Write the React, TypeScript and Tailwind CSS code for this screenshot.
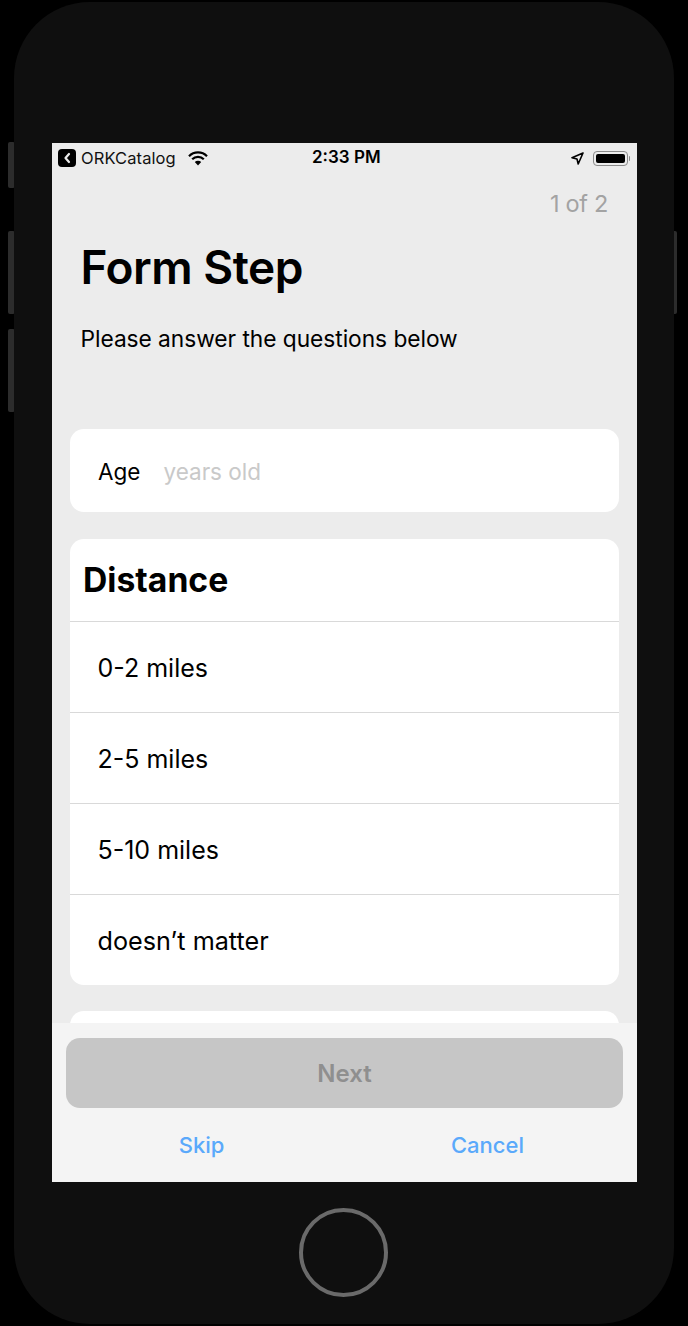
const Row = ({ label, last = false }: { label: string; last?: boolean }) => (
  <div className={`flex items-center pl-[27.5px] text-black ${last ? "h-[90px] pt-[4px] text-[25.2px]" : "h-[91px] pt-[3px] text-[25px] border-b border-[#d9d9d9]"}`}>
    {label}
  </div>
);

const SideButton = ({ className }: { className: string }) => (
  <div className={`absolute w-[7px] bg-[#2c2c2c] rounded-[2px] ${className}`} />
);

export default function App() {
  return (
    <div className="relative w-[688px] h-[1326px] bg-black overflow-hidden" style={{ fontFamily: "Inter, 'Liberation Sans', sans-serif" }}>
      <SideButton className="left-[8px] top-[142px] h-[46px]" />
      <SideButton className="left-[8px] top-[231px] h-[83px]" />
      <SideButton className="left-[8px] top-[329px] h-[83px]" />
      <SideButton className="left-[670px] top-[231px] h-[83px]" />
      <div className="relative ml-[14px] mt-[2px] w-[660px] h-[1322px] bg-[#0f0f0f] rounded-[76px] pt-[141px] pl-[38px]">
        <div className="w-[585px] h-[1039px] bg-[#ececec] flex flex-col overflow-hidden">
          <div className="h-[30px] shrink-0 flex items-center pl-[6px] pr-[7px] text-[16.5px] text-black relative">
            <span className="w-[18px] h-[18px] bg-black rounded-[4px] flex items-center justify-center">
              <svg width="8" height="12" viewBox="0 0 8 12"><path d="M6 2 2.5 6 6 10" fill="none" stroke="#ececec" strokeWidth="2.2" strokeLinecap="round" strokeLinejoin="round" /></svg>
            </span>
            <span className="ml-[5px] tracking-[0.1px] text-[#111]">ORKCatalog</span>
            <svg className="ml-[12px]" width="20" height="15" viewBox="0 0 20 15">
              <path d="M1 5.2a12.6 12.6 0 0 1 18 0" fill="none" stroke="#000" strokeWidth="2.2" />
              <path d="M4.2 8.3a8.1 8.1 0 0 1 11.6 0" fill="none" stroke="#000" strokeWidth="2.2" />
              <path d="M10 14.5 6.8 11a4.6 4.6 0 0 1 6.4 0Z" fill="#000" />
            </svg>
            <span className="absolute left-[260px] font-semibold text-[17px]">2:33 PM</span>
            <svg className="ml-auto mr-[9px]" width="13" height="13" viewBox="0 0 13 13">
              <path d="M12 1 1 5.8l5 1.2 1.2 5Z" fill="none" stroke="#000" strokeWidth="1.6" strokeLinejoin="round" />
            </svg>
            <span className="w-[35px] h-[15px] border border-[#8a8a8a] rounded-[4px] p-[2px] flex">
              <span className="flex-1 bg-black rounded-[2px]" />
            </span>
            <span className="w-[1.5px] h-[5px] bg-[#8a8a8a] ml-[1px] rounded-r-sm" />
          </div>
          <div className="h-[30px] shrink-0 mt-[16px] pr-[29px] text-right text-[23.5px] leading-[30px] text-[#a3a3a3] tracking-[-0.3px]">1 of 2</div>
          <div className="pl-[28.5px] pt-[20px] text-[46px] leading-[56px] font-semibold text-black tracking-[-0.5px]">Form Step</div>
          <div className="pl-[28.5px] pt-[28px] text-[22.75px] leading-[32px] text-black tracking-[-0.05px]">Please answer the questions below</div>
          <div className="flex-1 min-h-0 overflow-hidden px-[18px] pt-[74px] flex flex-col gap-[27px]">
            <div className="h-[83px] pt-[2px] shrink-0 bg-white rounded-[14px] flex items-center pl-7 text-[22.5px]">
              <span className="text-black">Age</span>
              <span className="ml-[23px] text-[#c9c9c9]">years old</span>
            </div>
            <div className="shrink-0 bg-white rounded-[14px]">
              <div className="h-[83px] pl-[13px] flex items-center text-[33.7px] font-bold text-black border-b border-[#d9d9d9]">Distance</div>
              <Row label="0-2 miles" />
              <Row label="2-5 miles" />
              <Row label="5-10 miles" />
              <Row label="doesn’t matter" last />
            </div>
            <div className="h-[40px] shrink-0 -mt-[1px] bg-white rounded-[14px]" />
          </div>
          <div className="h-[159px] shrink-0 bg-[#f4f4f4] px-[14px] pt-[15px] flex flex-col">
            <div className="h-[70px] pt-[2px] bg-[#c6c6c6] rounded-[14px] flex items-center justify-center text-[24px] font-semibold text-[#8f8f8f]">Next</div>
            <div className="flex mt-[20px] text-[22px] leading-[34px] text-[#5aa9fb] font-medium">
              <span className="w-[271px] shrink-0 text-center">Skip</span>
              <span className="w-[301px] shrink-0 text-center">Cancel</span>
            </div>
          </div>
        </div>
        <div className="absolute left-[285px] top-[1206px] w-[89px] h-[89px] rounded-full border-[4px] border-[#6a6a6a]" />
      </div>
    </div>
  );
}
